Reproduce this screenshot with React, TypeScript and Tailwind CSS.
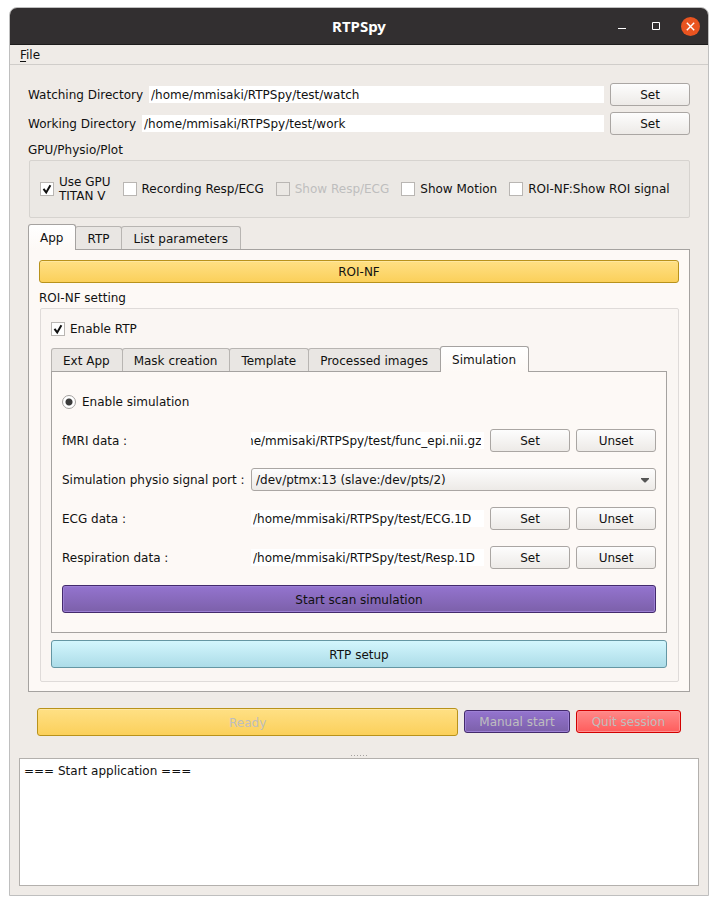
import { useEffect, useRef } from "react";
import type { ReactNode } from "react";

const buttonTone = {
  plain: "border-[#aaa6a3] from-[#fdfdfd] to-[#edeae7]",
  gold: "border-[#b8921b] from-[#ffe084] to-[#fbd05a] shadow-[inset_0_1px_0_#ffe79f]",
  purple: "border-[#432a6c] from-[#9474cf] to-[#7c60aa] shadow-[inset_0_0_0_1px_#9c80d4]",
  cyan: "border-[#6496a3] from-[#d3f6fd] to-[#acdce8]",
  red: "border-[#d20000] from-[#ff8888] to-[#ff5c5c] shadow-[inset_0_0_0_1px_#ff8f8f]",
};

function Button({
  tone = "plain",
  className = "h-[23px] w-20",
  disabled = false,
  children,
}: {
  tone?: keyof typeof buttonTone;
  className?: string;
  disabled?: boolean;
  children: ReactNode;
}) {
  return (
    <button
      type="button"
      disabled={disabled}
      className={`flex shrink-0 items-center justify-center rounded-[3px] border bg-linear-to-b disabled:text-[#bebebe] ${buttonTone[tone]} ${className}`}
    >
      {children}
    </button>
  );
}

function PathInput({ id, value, end = false }: { id: string; value: string; end?: boolean }) {
  const ref = useRef<HTMLInputElement>(null);
  useEffect(() => {
    if (end && ref.current) ref.current.scrollLeft = ref.current.scrollWidth;
  }, [end]);
  return (
    <input
      ref={ref}
      id={id}
      type="text"
      defaultValue={value}
      className={`h-[17px] min-w-0 flex-1 bg-white pr-[3px] outline-none ${end ? "pl-0" : "pl-[2px]"}`}
    />
  );
}

function Check({
  id,
  checked = false,
  disabled = false,
  children,
}: {
  id: string;
  checked?: boolean;
  disabled?: boolean;
  children: ReactNode;
}) {
  return (
    <div className="flex items-center gap-[5px]">
      <span className="relative size-[14px] shrink-0">
        <input
          id={id}
          type="checkbox"
          defaultChecked={checked}
          disabled={disabled}
          className="peer block size-[14px] appearance-none border border-[#b9b6b3] bg-white disabled:bg-transparent"
        />
        <svg
          viewBox="0 0 14 14"
          className="pointer-events-none absolute inset-0 hidden size-[14px] peer-checked:block"
          fill="none"
          stroke="#111"
          strokeWidth="2"
        >
          <path d="M3.5 6.8 L6.2 10.4 L10.4 3.2" />
        </svg>
      </span>
      <label htmlFor={id} className={`leading-[14px] whitespace-nowrap ${disabled ? "text-[#bebebe]" : ""}`}>
        {children}
      </label>
    </div>
  );
}

function Tabs({ names, active }: { names: string[]; active: string }) {
  return (
    <div role="tablist" className="relative flex items-end">
      {names.map((name, i) => (
        <button
          key={name}
          type="button"
          role="tab"
          aria-selected={name === active}
          className={`rounded-t-[3px] border border-b-0 pr-[12px] pl-[11px] whitespace-nowrap ${i > 0 ? "-ml-px" : ""} ${
            name === active
              ? "z-10 -mb-px h-[26px] border-[#a5a2a0] bg-linear-to-b from-white to-[#fdf9f6]"
              : "h-[23px] border-[#b8b5b2] bg-[#e9e6e3] pt-[2px]"
          }`}
        >
          {name}
        </button>
      ))}
    </div>
  );
}

function DirectoryRow({ id, label, value }: { id: string; label: string; value: string }) {
  return (
    <div className="flex items-center gap-[6px]">
      <label htmlFor={id}>{label}</label>
      <PathInput id={id} value={value} />
      <Button>Set</Button>
    </div>
  );
}

function DataRow({ id, label, value, end }: { id: string; label: string; value: string; end?: boolean }) {
  return (
    <div className="flex items-center gap-[6px]">
      <label htmlFor={id} className="w-[183px] shrink-0">
        {label}
      </label>
      <PathInput id={id} value={value} end={end} />
      <Button>Set</Button>
      <Button>Unset</Button>
    </div>
  );
}

export default function App() {
  return (
    <div className="flex min-h-screen flex-col bg-white px-[9px] pt-[7px] pb-[9px] font-['DejaVu_Sans',sans-serif] text-[12px] leading-4 text-[#111]">
      <div className="flex flex-1 flex-col rounded-t-lg border border-[#bfbfbf] bg-[#efebe7]">
        <header className="grid h-[37px] grid-cols-[1fr_auto_1fr] items-center rounded-t-[7px] border-b border-[#1c1b1b] bg-[#322f30] text-white">
          <h1 className="col-start-2 font-['Noto_Sans',sans-serif] text-[15px] font-bold">RTPSpy</h1>
          <div className="flex items-center justify-end gap-[15px] pr-[8px]">
            <button type="button" aria-label="Minimize" className="flex size-[19px] items-center justify-center">
              <svg viewBox="0 0 19 19" className="size-[19px]" fill="none" stroke="#fff">
                <path d="M5 11.5h8" />
              </svg>
            </button>
            <button type="button" aria-label="Maximize" className="flex size-[19px] items-center justify-center">
              <svg viewBox="0 0 19 19" className="size-[19px]" fill="none" stroke="#fff">
                <path d="M5.5 5.5h7v7h-7z" />
              </svg>
            </button>
            <button
              type="button"
              aria-label="Close"
              className="flex size-[19px] items-center justify-center rounded-full bg-[#e95420]"
            >
              <svg viewBox="0 0 19 19" className="size-[19px]" fill="none" stroke="#fff" strokeWidth="1.4">
                <path d="M5.8 5.8l7.4 7.4M13.2 5.8l-7.4 7.4" />
              </svg>
            </button>
          </div>
        </header>

        <nav className="flex h-5 items-center border-b border-[#d0cdca] px-[10px]">
          <button type="button">
            <span className="underline underline-offset-2">F</span>ile
          </button>
        </nav>

        <main className="flex flex-col px-[18px] pt-[18px]">
          <div className="flex flex-col gap-[6px]">
            <DirectoryRow id="watch" label="Watching Directory" value="/home/mmisaki/RTPSpy/test/watch" />
            <DirectoryRow id="work" label="Working Directory" value="/home/mmisaki/RTPSpy/test/work" />
          </div>

          <h2 className="pt-[7px] pb-[2px]">GPU/Physio/Plot</h2>
          <section className="mb-[6px] ml-px flex h-[58px] items-center gap-[12px] rounded-[2px] border border-[#d6d3cf] bg-[#ebe8e4] px-[10px]">
            <Check id="gpu" checked>
              Use GPU
              <br />
              TITAN V
            </Check>
            <Check id="rec">Recording Resp/ECG</Check>
            <Check id="resp-plot" disabled>
              Show Resp/ECG
            </Check>
            <Check id="motion">Show Motion</Check>
            <Check id="roi">ROI-NF:Show ROI signal</Check>
          </section>

          <Tabs names={["App", "RTP", "List parameters"]} active="App" />
          <section className="flex flex-col border border-[#a5a2a0] bg-[#fdf9f6] px-[10px] pt-[10px] pb-[9px]">
            <Button tone="gold" className="h-[23px]">
              ROI-NF
            </Button>
            <h2 className="pt-[7px] pb-[2px]">ROI-NF setting</h2>
            <section className="ml-px flex flex-col rounded-[2px] border border-[#dfdbd9] bg-[#faf6f3] pt-[12px] pr-[11px] pb-[13px] pl-[10px]">
              <div className="flex h-4 items-center">
                <Check id="rtp" checked>
                  Enable RTP
                </Check>
              </div>
              <div className="mt-[9px] mb-[7px]">
                <Tabs
                  names={["Ext App", "Mask creation", "Template", "Processed images", "Simulation"]}
                  active="Simulation"
                />
                <section className="flex flex-col gap-4 border border-[#a5a2a0] bg-[#fdf9f6] px-[10px] pt-[22px] pb-[19px]">
                  <div className="mb-[3px] flex h-4 items-center gap-[6px]">
                    <input
                      id="sim"
                      type="radio"
                      defaultChecked
                      className="size-[14px] appearance-none rounded-full border border-[#a3a09e] bg-white checked:bg-[radial-gradient(circle,#3b3b3b_3px,#fff_4px)]"
                    />
                    <label htmlFor="sim">Enable simulation</label>
                  </div>
                  <DataRow id="fmri" label="fMRI data :" value="/home/mmisaki/RTPSpy/test/func_epi.nii.gz" end />
                  <div className="flex items-center gap-[6px]">
                    <label htmlFor="port" className="w-[183px] shrink-0 whitespace-nowrap">
                      Simulation physio signal port :
                    </label>
                    <div className="relative min-w-0 flex-1">
                      <select
                        id="port"
                        className="block h-[23px] w-full appearance-none rounded-[3px] border border-[#aaa6a3] bg-linear-to-b from-[#fdfdfd] to-[#edeae7] px-[4px]"
                      >
                        <option>/dev/ptmx:13 (slave:/dev/pts/2)</option>
                      </select>
                      <svg
                        viewBox="0 0 8 5"
                        className="pointer-events-none absolute top-[10px] right-[7px] h-[5px] w-2"
                        fill="#555"
                      >
                        <path d="M0 0h8v1L4.5 4.5h-1L0 1z" />
                      </svg>
                    </div>
                  </div>
                  <DataRow id="ecg" label="ECG data :" value="/home/mmisaki/RTPSpy/test/ECG.1D" />
                  <DataRow id="respiration" label="Respiration data :" value="/home/mmisaki/RTPSpy/test/Resp.1D" />
                  <Button tone="purple" className="h-7 pt-[2px]">
                    Start scan simulation
                  </Button>
                </section>
              </div>
              <Button tone="cyan" className="h-7 pt-[2px]">
                RTP setup
              </Button>
            </section>
          </section>

          <div className="grid grid-cols-[4fr_1fr_1fr] items-start gap-[6px] px-[9px] pt-4">
            <Button tone="gold" className="h-7 pt-[2px]" disabled>
              Ready
            </Button>
            <Button tone="purple" className="mt-[2px] h-[23px]" disabled>
              Manual start
            </Button>
            <Button tone="red" className="mt-[2px] h-[23px]" disabled>
              Quit session
            </Button>
          </div>
        </main>

        <div className="flex h-[22px] items-end justify-center gap-[2px] pb-[2px]">
          {[0, 1, 2, 3, 4, 5].map((n) => (
            <span key={n} className="size-px bg-[#a5a2a0]" />
          ))}
        </div>

        <div className="flex flex-1 flex-col px-[9px] pb-[9px]">
          <textarea
            aria-label="Log"
            readOnly
            defaultValue="=== Start application ==="
            className="min-h-[128px] flex-1 resize-none border border-[#b3b0ad] bg-white px-[4px] py-[4px] outline-none"
          />
        </div>
      </div>
    </div>
  );
}
